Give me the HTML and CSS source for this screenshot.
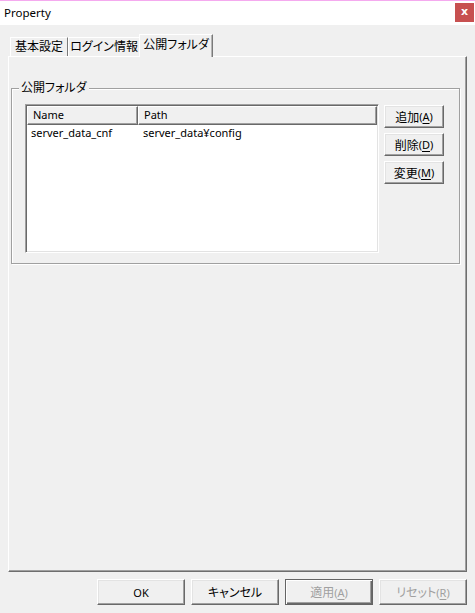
FILE: index.html
```html
<!DOCTYPE html>
<html lang="ja">
<head>
<meta charset="utf-8">
<title>Property</title>
<link rel="stylesheet" href="styles.css">
</head>
<body>
<div class="window">
  <div class="titlebar">
    <span class="title latin">Property</span>
    <span class="close">x</span>
  </div>
  <div class="main">
    <div class="tabs">
      <div class="tab tab-1">基本設定</div>
      <div class="tab tab-2">ログイン情報</div>
      <div class="tab tab-active">公開フォルダ</div>
    </div>
    <div class="panel">
      <div class="group">
        <span class="legend">公開フォルダ</span>
        <div class="group-body">
          <div class="listview">
            <div class="lv-header">
              <div class="hcell hcell-name latin">Name</div>
              <div class="hcell hcell-path latin">Path</div>
            </div>
            <div class="lv-row">
              <div class="cell cell-name latin">server_data_cnf</div>
              <div class="cell cell-path latin">server_data¥config</div>
            </div>
          </div>
          <div class="side-buttons">
            <div class="btn btn-side">追加<span class="latin">(<u>A</u>)</span></div>
            <div class="btn btn-side">削除<span class="latin">(<u>D</u>)</span></div>
            <div class="btn btn-side">変更<span class="latin">(<u>M</u>)</span></div>
          </div>
        </div>
      </div>
    </div>
  </div>
  <div class="footer">
    <div class="btn btn-foot latin">OK</div>
    <div class="btn btn-foot">キャンセル</div>
    <div class="btn btn-foot btn-default disabled">適用<span class="latin">(<u>A</u>)</span></div>
    <div class="btn btn-foot disabled">リセット<span class="latin">(<u>R</u>)</span></div>
  </div>
</div>
</body>
</html>
```
FILE: styles.css
```css
* { box-sizing: border-box; }
html, body {
  margin: 0;
  padding: 0;
}
body {
  width: 475px;
  height: 613px;
  background: #f0f0f0;
  font-family: "Noto Sans", "Noto Sans CJK JP", sans-serif;
  font-size: 12px;
  color: #000;
  font-feature-settings: "palt" 1;
  overflow: hidden;
}
.latin {
  font-size: 11px;
}
.window {
  width: 475px;
  height: 613px;
}
.titlebar {
  height: 25px;
  border-top: 1px solid #f5aaef;
  background: #fff;
  display: flex;
  justify-content: space-between;
  align-items: center;
  padding-left: 4px;
}
.title {
  line-height: 16px;
  margin-top: -1px;
  font-size: 11.5px;
}
.close {
  align-self: flex-start;
  margin-top: 2px;
  margin-right: 1px;
  width: 19px;
  height: 19px;
  background: #c75050;
  color: #fff;
  font-weight: bold;
  font-size: 11px;
  line-height: 17px;
  text-align: center;
  font-family: "DejaVu Sans", sans-serif;
}
.main {
  padding: 0 8px;
}
.tabs {
  height: 31px;
  display: flex;
  align-items: flex-end;
  padding-left: 2px;
}
.tab {
  height: 19px;
  line-height: 17px;
  border-top: 1px solid #fff;
  border-left: 1px solid #fff;
  border-right: 1px solid #7a7a7a;
  text-align: center;
  white-space: nowrap;
  background: #f0f0f0;
}
.tab-1 { width: 58px; }
.tab-2 { width: 72px; }
.tab-active {
  width: 74px;
  height: 23px;
  margin-left: -1px;
  margin-bottom: -1px;
  position: relative;
  z-index: 2;
  line-height: 19px;
  box-shadow: inset -1px 0 0 #b5b5b5;
}
.panel {
  height: 516px;
  border: 1px solid;
  border-color: #fff #6e6e6e #6e6e6e #fff;
  box-shadow: inset -1px -1px 0 #a0a0a0;
  padding-top: 31px;
  padding-left: 2px;
}
.group {
  position: relative;
  width: 449px;
  height: 176px;
  border: 1px solid #a0a0a0;
  box-shadow: inset 1px 1px 0 #fff, 1px 1px 0 #fff;
  padding: 15px 0 0 13px;
}
.legend {
  position: absolute;
  top: -9px;
  left: 7px;
  padding: 0 2px;
  background: #f0f0f0;
  line-height: 16px;
}
.group-body {
  display: flex;
  align-items: flex-start;
}
.listview {
  width: 354px;
  height: 149px;
  background: #fff;
  border: 1px solid;
  border-color: #a0a0a0 #fff #fff #a0a0a0;
  box-shadow: inset 1px 1px 0 #696969, inset -1px -1px 0 #e3e3e3;
  padding: 1px;
}
.lv-header {
  display: flex;
  height: 19px;
}
.hcell {
  height: 19px;
  line-height: 16px;
  background: #f0f0f0;
  border-top: 1px solid #fff;
  border-left: 1px solid #fff;
  border-right: 1px solid #696969;
  border-bottom: 1px solid #696969;
  box-shadow: inset -1px -1px 0 #a0a0a0;
}
.hcell-name {
  width: 111px;
  padding-left: 5px;
}
.hcell-path {
  flex: 1;
  padding-left: 5px;
}
.lv-row {
  display: flex;
  height: 16px;
  line-height: 16px;
  margin-top: 0;
}
.cell-name {
  width: 111px;
  padding-left: 4px;
}
.cell-path {
  padding-left: 5px;
}
.side-buttons {
  margin-left: 5px;
  margin-top: 1px;
  display: flex;
  flex-direction: column;
  gap: 5px;
}
.btn {
  display: flex;
  align-items: center;
  justify-content: center;
  background: #f0f0f0;
  border: 1px solid;
  border-color: #fff #696969 #696969 #fff;
  box-shadow: inset -1px -1px 0 #a0a0a0, inset 1px 1px 0 #e3e3e3;
  white-space: nowrap;
}
.btn u {
  text-decoration: underline;
  text-underline-offset: 2px;
}
.btn-side {
  width: 60px;
  height: 23px;
}
.footer {
  display: flex;
  justify-content: flex-end;
  gap: 6px;
  margin-top: 7px;
  padding-right: 8px;
}
.btn-foot {
  width: 88px;
  height: 26px;
}
.btn-default {
  border-color: #646464;
  box-shadow: inset 1px 1px 0 #fff, inset -1px -1px 0 #696969, inset -2px -2px 0 #a0a0a0;
}
.disabled {
  color: #a0a0a0;
}
```
